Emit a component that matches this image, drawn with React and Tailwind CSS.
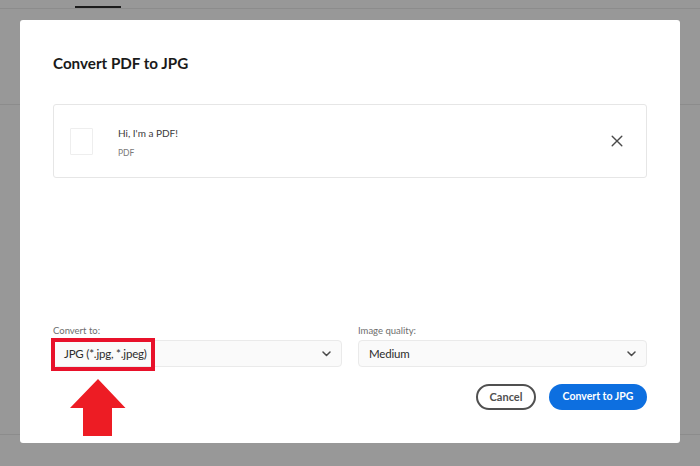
import React from 'react';

function Chevron() {
  return (
    <svg width="9" height="6" viewBox="0 0 9 6" fill="none" className="shrink-0">
      <path d="M1 1 L4.5 4.5 L8 1" stroke="#4b4b4b" strokeWidth="1.5" strokeLinecap="round" strokeLinejoin="round" />
    </svg>
  );
}

function Select({ label, value }) {
  return (
    <div className="flex-1">
      <label className="block text-[9.5px] leading-[14px] mb-[2px] text-[#6e6e6e]">{label}</label>
      <div className="h-[27px] pl-[10px] pr-[10px] flex items-center justify-between bg-[#fafafa] border border-[#eaeaea] rounded-[4px]">
        <span className="text-[11.5px] tracking-[-0.2px] text-[#2c2c2c]">{value}</span>
        <Chevron />
      </div>
    </div>
  );
}

function App() {
  return (
    <div className="relative w-[700px] h-[466px] overflow-hidden bg-[#989898] font-['Lato',sans-serif]">
      {/* page behind the dialog */}
      <div className="h-[9px] pt-[6px] border-b border-[#8c8c8c] pl-[75px]">
        <div className="w-[46px] h-[2px] bg-[#1c1c1c]" />
      </div>
      <div className="h-[96px] border-b border-[#8c8c8c]" />
      <div className="h-[330px] border-b border-[#8c8c8c]" />

      {/* dialog */}
      <div className="absolute left-[20px] top-[20px] w-[660px] h-[423px] px-[33px] pt-[32px] pb-[33px] flex flex-col bg-white rounded-[3px]">
        <h1 className="text-[15.2px] leading-[22px] font-bold text-[#1a1a1a]">Convert PDF to JPG</h1>

        <div className="mt-[30px] h-[74px] pl-[16px] pr-[23px] flex items-center bg-white border border-[#e6e6e6] rounded-[3px]">
          <div className="w-[23px] h-[27px] border border-[#eeeeee] rounded-[1px]" />
          <div className="ml-[25px] flex-1 pt-[2px]">
            <div className="text-[10px] leading-[14px] text-[#3a3a3a]">Hi, I'm a PDF!</div>
            <div className="mt-[7px] text-[8.5px] leading-[12px] text-[#7a7a7a]">PDF</div>
          </div>
          <svg width="12" height="12" viewBox="0 0 12 12" fill="none">
            <path d="M1.2 1.2 L10.8 10.8 M10.8 1.2 L1.2 10.8" stroke="#4a4a4a" strokeWidth="1.4" strokeLinecap="round" />
          </svg>
        </div>

        <div className="mt-auto flex gap-[16px]">
          <Select label="Convert to:" value="JPG (*.jpg, *.jpeg)" />
          <Select label="Image quality:" value="Medium" />
        </div>

        <div className="mt-[17px] flex justify-end gap-[13px]">
          <button className="w-[60px] h-[26px] rounded-full border-2 border-[#505050] text-[11px] font-bold text-[#505050]">Cancel</button>
          <button className="w-[98px] h-[26px] rounded-full bg-[#0d6fe0] text-[10.5px] font-bold text-white">Convert to JPG</button>
        </div>
      </div>

      {/* red annotation */}
      <div className="absolute left-[51px] top-[338px] w-[104px] h-[33px] border-[4px] border-[#e8112a]" />
      <svg className="absolute left-[69px] top-[378px]" width="58" height="59" viewBox="0 0 58 59">
        <path d="M29 1 L56.5 30 L43 30 L43 58 L14 58 L14 30 L1 30 Z" fill="#ed1c24" />
      </svg>
    </div>
  );
}

export default App;
